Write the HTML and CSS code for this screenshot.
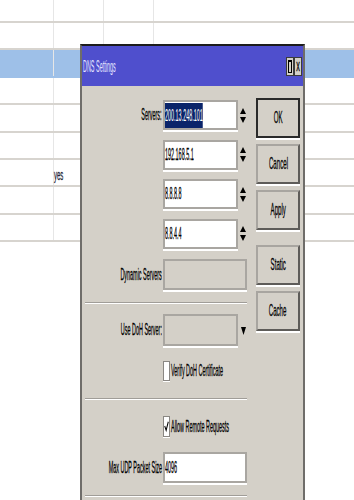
FILE: index.html
```html
<!DOCTYPE html>
<html lang="en">
<head>
    <meta charset="UTF-8">
    <title>DNS Settings</title>
    <link rel="stylesheet" href="styles.css">
</head>
<body>
    <div class="list">
        <div class="row first"><div class="cell c1"></div><div class="cell c2"></div><div class="cell c3"></div><div class="cell c4"></div></div>
        <div class="row"><div class="cell c1"></div><div class="cell c2"></div><div class="cell c3"></div><div class="cell c4"></div></div>
        <div class="row selected"><div class="cell c1"></div><div class="cell c2"></div><div class="cell c3"></div><div class="cell c4"></div></div>
        <div class="row"><div class="cell c1"></div><div class="cell c2"></div><div class="cell c3"></div><div class="cell c4"></div></div>
        <div class="row"><div class="cell c1"></div><div class="cell c2"></div><div class="cell c3"></div><div class="cell c4"></div></div>
        <div class="row"><div class="cell c1"></div><div class="cell c2"></div><div class="cell c3"></div><div class="cell c4"></div></div>
        <div class="row"><div class="cell c1"></div><div class="cell c2"><span class="sq yes">yes</span></div><div class="cell c3"></div><div class="cell c4"></div></div>
        <div class="row"><div class="cell c1"></div><div class="cell c2"></div><div class="cell c3"></div><div class="cell c4"></div></div>
        <div class="row"><div class="cell c1"></div><div class="cell c2"></div><div class="cell c3"></div><div class="cell c4"></div></div>
    </div>

    <div class="dialog">
        <div class="titlebar">
            <span class="sq title">DNS Settings</span>
            <div class="tbtns">
                <div class="tbtn"><span class="maxbox"></span></div>
                <div class="tbtn"><span class="sq">x</span></div>
            </div>
        </div>
        <div class="dlg-body">
            <div class="form">
                <div class="frow srv">
                    <div class="lbl"><span class="sq">Servers:</span></div>
                    <div class="field"><span class="sq sel">200.13.248.101</span></div>
                    <svg class="spin" viewBox="0 0 6 15"><path d="M3 0L6 6H0Z M0 9H6L3 15Z"/></svg>
                </div>
                <div class="frow srv">
                    <div class="lbl"></div>
                    <div class="field"><span class="sq">192.168.5.1</span></div>
                    <svg class="spin" viewBox="0 0 6 15"><path d="M3 0L6 6H0Z M0 9H6L3 15Z"/></svg>
                </div>
                <div class="frow srv">
                    <div class="lbl"></div>
                    <div class="field"><span class="sq">8.8.8.8</span></div>
                    <svg class="spin" viewBox="0 0 6 15"><path d="M3 0L6 6H0Z M0 9H6L3 15Z"/></svg>
                </div>
                <div class="frow srv">
                    <div class="lbl"></div>
                    <div class="field"><span class="sq">8.8.4.4</span></div>
                    <svg class="spin" viewBox="0 0 6 15"><path d="M3 0L6 6H0Z M0 9H6L3 15Z"/></svg>
                </div>
                <div class="frow dyn">
                    <div class="lbl"><span class="sq">Dynamic Servers</span></div>
                    <div class="field wide off"></div>
                </div>
                <div class="sep"></div>
                <div class="frow doh">
                    <div class="lbl"><span class="sq">Use DoH Server:</span></div>
                    <div class="field off"></div>
                    <svg class="drop" viewBox="0 0 5 8"><path d="M0 0H5L2.5 8Z"/></svg>
                </div>
                <div class="frow check verify">
                    <div class="lbl"></div>
                    <div class="chk"></div>
                    <span class="sq">Verify DoH Certificate</span>
                </div>
                <div class="sep sep2"></div>
                <div class="frow check allow">
                    <div class="lbl"></div>
                    <div class="chk"><svg viewBox="0 0 7 20" preserveAspectRatio="none"><path d="M1 9.5L3 14L6 5" fill="none" stroke="#000" stroke-width="1.4"/></svg></div>
                    <span class="sq">Allow Remote Requests</span>
                </div>
                <div class="frow udp">
                    <div class="lbl"><span class="sq">Max UDP Packet Size</span></div>
                    <div class="field wide"><span class="sq">4096</span></div>
                </div>
                <div class="sep"></div>
            </div>
            <div class="buttons">
                <button class="btn default"><span class="sq">OK</span></button>
                <button class="btn"><span class="sq">Cancel</span></button>
                <button class="btn"><span class="sq">Apply</span></button>
                <button class="btn later"><span class="sq">Static</span></button>
                <button class="btn"><span class="sq">Cache</span></button>
            </div>
        </div>
    </div>
</body>
</html>
```

FILE: styles.css
```css
* { margin: 0; padding: 0; box-sizing: border-box; }
body {
    font-family: "Liberation Sans", Arial, sans-serif;
    font-size: 16px;
    color: #000;
    background: #fff;
    width: 354px;
    height: 500px;
    overflow: hidden;
    position: relative;
}
/* the whole shot is squeezed sideways, so text is too */
.sq {
    display: inline-block;
    white-space: nowrap;
    transform: scaleX(0.34);
    transform-origin: left center;
    -webkit-text-stroke: 0.3px currentColor;
}

/* list behind the window */
.row { display: flex; height: 27.4px; border-bottom: 2px solid #d7d4cf; }
.row.first { height: 23px; }
.row.selected { background: #9ec0e8; border-bottom-color: #9ec0e8; }
.cell { flex: none; height: 100%; border-right: 1px solid #e6e6e6; display: flex; align-items: center; }
.c1 { width: 54px; }
.c2 { width: 50px; }
.c3 { width: 50px; }
.c4 { flex: 1; border-right: none; }
.yes { font-size: 15px; color: #1e2438; transform: scaleX(0.4); padding-top: 3px; }

/* window */
.dialog {
    position: absolute;
    left: 80px;
    top: 44px;
    width: 225px;
    height: 480px;
    background: #d4d0c8;
    border: 2px solid #6f6d6a;
    border-top-color: #1c1c1c;
    border-bottom: none;
}
.titlebar {
    height: 40px;
    background: #4f4fcd;
    display: flex;
    align-items: center;
    justify-content: space-between;
    padding: 0 1px;
}
.title { color: #e4e4ff; padding-top: 1px; -webkit-text-stroke: 0; }
.tbtns { display: flex; }
.tbtn {
    width: 8px; height: 19px;
    background: #d4d0c8;
    border: 1px solid #3c3c3c;
    display: flex; align-items: center; justify-content: center;
    overflow: hidden;
    font-size: 16px;
}
.tbtn .sq { transform: scaleX(0.45); transform-origin: center; }
.maxbox { width: 4px; height: 13px; border: 1px solid #000; border-top-width: 2px; }

.dlg-body { display: flex; }
.form { width: 165px; flex: none; padding-top: 14px; }
.frow { display: flex; align-items: center; }
.lbl { width: 81px; flex: none; display: flex; justify-content: flex-end; padding-right: 1px; }
.lbl .sq { transform-origin: right center; }

.field {
    width: 75px; height: 30px; flex: none;
    background: #fff;
    border: 2px solid #a9a6a1;
    box-shadow: 0 2px 0 #fff;
    display: flex; align-items: center;
    overflow: hidden;
}
.field.wide { width: 84px; }
.field.off { background: #d4d0c8; }
.sel { background: #0a246a; color: #fff; line-height: 25px; -webkit-text-stroke: 0; }
.spin { width: 6px; height: 15px; margin-left: 2px; }
.drop { width: 5px; height: 8px; margin-left: 3px; margin-top: 2px; }

.srv + .srv { margin-top: 9.5px; }
.dyn { margin-top: 10.5px; }
.dyn .field { height: 31px; }
.sep { margin: 12px 0 0 3px; height: 2px; border-top: 1px solid #a09d98; border-bottom: 1px solid #fff; }
.doh { margin-top: 10px; }
.doh .field { height: 32px; }
.check { height: 20px; }
.verify { margin-top: 15px; }
.sep2 { margin-top: 17px; }
.allow { margin-top: 16px; height: 21px; }
.chk {
    width: 7px; height: 100%; flex: none;
    background: #fff;
    border: 1px solid #8a8783;
    box-shadow: 0 1px 0 #fff;
    margin-right: 1px;
}
.chk svg { display: block; width: 100%; height: 100%; }
.udp { margin-top: 15px; }
.udp .field { height: 31px; }

.buttons { margin-left: 9px; padding-top: 12px; display: flex; flex-direction: column; gap: 6px; }
.btn {
    width: 44px; height: 40px; flex: none;
    background: #d4d0c8;
    border: 2px solid;
    border-color: #a8a5a0 #5e5c59 #5e5c59 #a8a5a0;
    box-shadow: 0 2px 0 #fff;
    display: flex; align-items: center; justify-content: center;
    font: inherit;
    font-size: 17px;
    color: #000;
    overflow: hidden;
}
.btn .sq { transform: scaleX(0.36); transform-origin: center; }
.btn.default { border-color: #2a2a2a; }
.btn.later { margin-top: 9px; }
```
